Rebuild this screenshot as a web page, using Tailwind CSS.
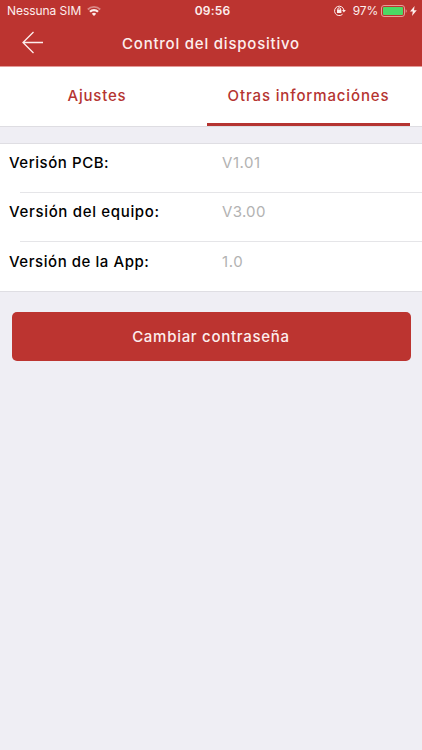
<!DOCTYPE html>
<html lang="es">
<head>
  <meta charset="UTF-8">
  <meta name="viewport" content="width=device-width, initial-scale=1.0">
  <title>Control del dispositivo</title>
  <script src="https://cdn.jsdelivr.net/npm/@tailwindcss/browser@4"></script>
</head>
<body class="bg-[#efeef4] h-screen overflow-hidden font-['Inter',sans-serif] text-[15px] font-medium">

  <header class="bg-[#bc3430] text-[#fdeeed] h-[66px]">
    <!-- Status bar -->
    <div class="grid grid-cols-[1fr_auto_1fr] items-center h-[22px] pl-[7px] pr-[5px] text-[12px] font-normal">
      <div class="flex items-center gap-[6px]">
        <span class="tracking-[-0.05px]">Nessuna SIM</span>
        <svg class="w-[14px] h-[10px]" viewBox="0 0 14 10" fill="none" stroke="currentColor" stroke-width="1.8">
          <path d="M0.8 3.5A8.8 8.8 0 0 1 13.2 3.5" opacity="0.45"/>
          <path d="M3 5.7A5.7 5.7 0 0 1 11 5.7" stroke-width="2.3"/>
          <path d="M7 10L4.8 7.8A3.2 3.2 0 0 1 9.2 7.8Z" fill="currentColor" stroke="none"/>
        </svg>
      </div>
      <span class="font-semibold tracking-[0.2px] ml-px">09:56</span>
      <div class="flex items-center justify-end">
        <svg class="w-[12px] h-[11px] mr-[7px] -mt-px" viewBox="0 0 12 11" fill="none" stroke="currentColor">
          <path d="M8.6 9.2A4.7 4.7 0 1 1 9.9 5.2"/>
          <path d="M8 5h3.8L9.9 7.4Z" fill="currentColor" stroke="none"/>
          <rect x="3" y="4.6" width="4.4" height="3.4" fill="currentColor" stroke="none"/>
          <path d="M3.9 5V4a1.3 1.3 0 0 1 2.6 0v1" stroke-width="0.9"/>
        </svg>
        <span class="mr-[3px] tracking-[-0.2px]">97%</span>
        <svg class="w-[26px] h-[12px] mr-[3px]" viewBox="0 0 26 12">
          <rect x="0.5" y="0.5" width="23" height="11" rx="2.5" fill="none" stroke="#e79c98"/>
          <rect x="2" y="2" width="20" height="8" rx="1" fill="#4cd964"/>
          <path d="M24.7 4.2c1.3.5 1.3 3.1 0 3.6Z" fill="#e79c98"/>
        </svg>
        <svg class="w-[7px] h-[10px]" viewBox="0 0 7 10" fill="currentColor">
          <path d="M4.6 0L0 5.6h2.8L2 10l4.8-5.8H4Z"/>
        </svg>
      </div>
    </div>

    <!-- Navigation bar -->
    <div class="grid grid-cols-[60px_1fr_60px] items-center h-[44px]">
      <svg class="w-[22px] h-[23px] ml-[22px] -mt-[3px]" viewBox="0 0 22 23" fill="none" stroke="currentColor" stroke-width="1.3">
        <path d="M11.5 1L1 11.5L11.5 22M1 11.5H21"/>
      </svg>
      <h1 class="text-center tracking-[0.78px]">Control del dispositivo</h1>
    </div>
  </header>

  <!-- Tabs -->
  <nav class="bg-white h-[61px] border-t border-t-[#e39a98] border-b border-b-[#dedde2] grid grid-cols-[194px_203px] gap-[13px] text-[#b53431]">
    <a class="flex items-center justify-center pb-px tracking-[0.8px]">Ajustes</a>
    <a class="flex items-center justify-center border-b-3 border-[#b53431] pt-[2px] tracking-[0.87px]">Otras informaciónes</a>
  </nav>

  <!-- Versions -->
  <dl class="mt-[16px] bg-white border-y border-[#dfdee3] h-[149px] text-black tracking-[0.55px]">
    <div class="flex h-[48px] pt-[8px] pl-[9px]">
      <dt class="w-[213px]">Verisón PCB:</dt>
      <dd class="font-normal text-[#b2b2b2]">V1.01</dd>
    </div>
    <div class="ml-[20px] h-px bg-[#e5e5e8]"></div>
    <div class="flex h-[48px] pt-[8px] pl-[9px]">
      <dt class="w-[213px] tracking-[0.67px]">Versión del equipo:</dt>
      <dd class="font-normal text-[#b2b2b2] tracking-[0.3px]">V3.00</dd>
    </div>
    <div class="ml-[20px] h-px bg-[#e5e5e8]"></div>
    <div class="flex h-[48px] pt-[9px] pl-[9px]">
      <dt class="w-[213px]">Versión de la App:</dt>
      <dd class="font-normal text-[#b2b2b2]">1.0</dd>
    </div>
  </dl>

  <div class="pt-[20px] px-[11.5px]">
    <button class="w-full h-[49px] pt-px rounded-[5px] bg-[#bc3430] text-[#fdeeed] tracking-[0.72px]">Cambiar contraseña</button>
  </div>

</body>
</html>
